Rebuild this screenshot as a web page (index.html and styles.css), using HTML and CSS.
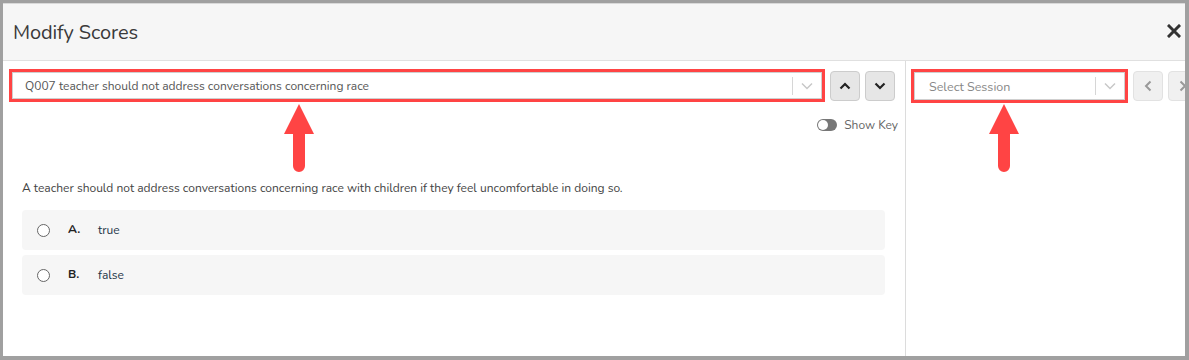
FILE: index.html
```html
<!DOCTYPE html>
<html>
<head>
<meta charset="utf-8">
<link rel="stylesheet" href="styles.css">
</head>
<body>
<div class="modal">
  <div class="header">
    <div class="title">Modify Scores</div>
    <svg class="close" width="14" height="14" viewBox="0 0 14 14"><path d="M2 2L12 12M12 2L2 12" stroke="#333" stroke-width="3" stroke-linecap="square"/></svg>
  </div>
  <div class="body">
    <div class="left">
      <div class="toolbar">
        <div class="hl hl-q">
          <div class="select">
            <span class="select-text">Q007 teacher should not address conversations concerning race</span>
            <span class="sep"></span>
            <svg class="chev" width="12" height="8" viewBox="0 0 12 8"><path d="M1 1.5L6 6.5L11 1.5" fill="none" stroke="#c8c8c8" stroke-width="1.5"/></svg>
          </div>
        </div>
        <button class="nav-btn"><svg width="12" height="8" viewBox="0 0 12 8"><path d="M1.5 6.5L6 2L10.5 6.5" fill="none" stroke="#222" stroke-width="2.2"/></svg></button>
        <button class="nav-btn"><svg width="12" height="8" viewBox="0 0 12 8"><path d="M1.5 1.5L6 6L10.5 1.5" fill="none" stroke="#222" stroke-width="2.2"/></svg></button>
      </div>
      <div class="keyrow">
        <span class="toggle"><span class="knob"></span></span>
        <span class="key-label">Show Key</span>
      </div>
      <p class="question">A teacher should not address conversations concerning race with children if they feel uncomfortable in doing so.</p>
      <div class="options">
        <div class="option"><span class="radio"></span><span class="letter">A.</span><span class="answer">true</span></div>
        <div class="option"><span class="radio"></span><span class="letter">B.</span><span class="answer">false</span></div>
      </div>
    </div>
    <div class="right">
      <div class="toolbar">
        <div class="hl hl-s">
          <div class="select">
            <span class="select-text placeholder">Select Session</span>
            <span class="sep"></span>
            <svg class="chev" width="12" height="8" viewBox="0 0 12 8"><path d="M1 1.5L6 6.5L11 1.5" fill="none" stroke="#c8c8c8" stroke-width="1.5"/></svg>
          </div>
        </div>
        <button class="nav-btn light"><svg width="8" height="12" viewBox="0 0 8 12"><path d="M6.5 1.5L2 6L6.5 10.5" fill="none" stroke="#999" stroke-width="2"/></svg></button>
        <button class="nav-btn light"><svg width="8" height="12" viewBox="0 0 8 12"><path d="M1.5 1.5L6 6L1.5 10.5" fill="none" stroke="#999" stroke-width="2"/></svg></button>
      </div>
    </div>
  </div>
  <svg class="arrow arrow-left" width="32" height="68" viewBox="0 0 32 68"><path d="M16 0L31 30H22V62A6 6 0 0 1 10 62V30H1Z" fill="#ff4444"/></svg>
  <svg class="arrow arrow-right" width="32" height="68" viewBox="0 0 32 68"><path d="M16 0L31 30H22V62A6 6 0 0 1 10 62V30H1Z" fill="#ff4444"/></svg>
</div>
</body>
</html>
```
FILE: styles.css
```css
* { box-sizing: border-box; }
html, body { margin: 0; padding: 0; }
body {
  width: 1189px;
  height: 360px;
  overflow: hidden;
  font-family: "Nunito", Lato, "Open Sans", sans-serif;
  background: #a0a0a0;
}
.modal {
  position: relative;
  width: 1189px;
  height: 360px;
  border-style: solid;
  border-color: #a0a0a0;
  border-width: 3px 4px 4px 3px;
  background: #fff;
  display: flex;
  flex-direction: column;
}
.header {
  height: 58px;
  flex: none;
  background: #f6f6f6;
  border-top: 1px solid #d9d9d9;
  border-bottom: 1px solid #e0e0e0;
  display: flex;
  align-items: center;
  justify-content: space-between;
  padding: 0 4px 0 10px;
}
.title {
  font-size: 20px;
  color: #3a3a3a;
  letter-spacing: -0.1px;
}
.close { display: block; margin-top: -2px; }
.body {
  flex: 1;
  display: flex;
  min-height: 0;
}
.left {
  width: 903px;
  flex: none;
  border-right: 1px solid #dcdcdc;
  padding: 8px 10px 0 6px;
}
.right {
  flex: 1;
  padding: 8px 0 0 5px;
  overflow: hidden;
}
.toolbar {
  display: flex;
  align-items: center;
  gap: 5px;
}
.hl {
  border: 3px solid #ff4444;
  height: 33px;
  flex: none;
}
.hl-q { width: 816px; }
.hl-s { width: 217px; height: 34px; }
.select {
  height: 100%;
  border: 1px solid #cfcfcf;
  background: #fff;
  display: flex;
  align-items: center;
  padding: 0 8px 0 12px;
}
.hl-s .select { padding-left: 14px; }
.select-text {
  flex: 1;
  font-size: 12px;
  color: #555;
  white-space: nowrap;
}
.placeholder { color: #888; font-size: 12.5px; }
.sep {
  width: 1px;
  height: 18px;
  background: #d6d6d6;
  margin-right: 8px;
}
.chev { display: block; }
.nav-btn {
  width: 30px;
  height: 30px;
  flex: none;
  border: 1px solid #cccccc;
  border-radius: 4px;
  background: #e6e6e6;
  padding: 0;
  display: flex;
  align-items: center;
  justify-content: center;
}
.nav-btn.light {
  background: #f0f0f0;
  border-color: #e2e2e2;
}
.keyrow {
  display: flex;
  justify-content: flex-end;
  align-items: center;
  gap: 7px;
  margin-top: 15px;
  margin-right: -3px;
}
.toggle {
  width: 20px;
  height: 12px;
  border-radius: 6px;
  background: #777;
  position: relative;
  display: block;
}
.knob {
  position: absolute;
  left: 1px;
  top: 1px;
  width: 10px;
  height: 10px;
  border-radius: 50%;
  background: #fff;
}
.key-label {
  font-size: 12px;
  color: #666;
}
.question {
  margin: 47px 0 0 13px;
  font-size: 12px;
  color: #444;
}
.options {
  margin: 14px 10px 0 13px;
  display: flex;
  flex-direction: column;
  gap: 5px;
}
.option {
  height: 40px;
  background: #f6f6f6;
  border-radius: 4px;
  display: flex;
  align-items: center;
  padding-left: 15px;
}
.radio {
  width: 13px;
  height: 13px;
  border: 1px solid #666;
  border-radius: 50%;
  background: #fff;
  flex: none;
}
.letter {
  margin-left: 18px;
  width: 30px;
  font-size: 12px;
  font-weight: bold;
  color: #222;
  margin-top: -3px;
}
.answer {
  font-size: 12px;
  color: #243447;
}
.arrow { position: absolute; }
.arrow-left { left: 280px; top: 101px; }
.arrow-right { left: 985px; top: 101px; }
```
